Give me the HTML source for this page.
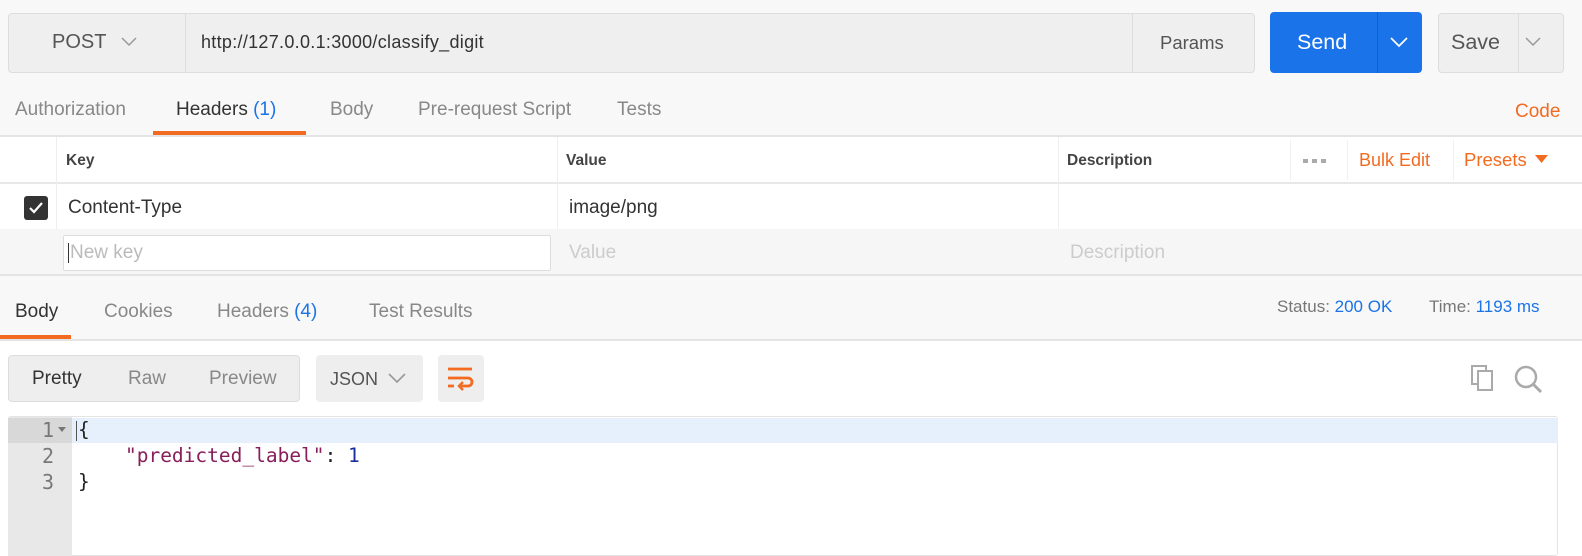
<!DOCTYPE html>
<html><head><style>
*{margin:0;padding:0;box-sizing:border-box}
body{width:1582px;height:556px;overflow:hidden;background:#fff;font-family:"Liberation Sans",sans-serif;position:relative;color:#333}
.a{position:absolute}
.t{position:absolute;white-space:nowrap;font-size:19px;line-height:22px}
</style></head><body>
<div class="a" style="left:0;top:0;width:1582px;height:341px;background:#f8f8f8"></div>
<!-- url bar -->
<div class="a" style="left:8px;top:13px;width:1247px;height:60px;background:#efefef;border:1px solid #ddd;border-radius:4px"></div>
<div class="a" style="left:185px;top:14px;width:1px;height:58px;background:#ddd"></div>
<div class="a" style="left:1132px;top:14px;width:1px;height:58px;background:#ddd"></div>
<div class="t" style="left:52px;top:31px;font-size:20px;color:#555">POST</div>
<svg class="a" style="left:120px;top:36px" width="18" height="12"><path d="M2 2l7 7 7-7" stroke="#999" stroke-width="1.5" fill="none"/></svg>
<div class="t" style="left:201px;top:31px;font-size:18px;letter-spacing:0.3px;color:#333">http://127.0.0.1:3000/classify_digit</div>
<div class="t" style="left:1160px;top:32px;font-size:18.5px;color:#555">Params</div>
<div class="a" style="left:1270px;top:12px;width:152px;height:61px;background:#1a73e8;border-radius:4px"></div>
<div class="a" style="left:1377px;top:12px;width:1px;height:61px;background:#1560c8"></div>
<div class="t" style="left:1297px;top:31px;font-size:21.5px;color:#fff">Send</div>
<svg class="a" style="left:1389px;top:36px" width="20" height="12"><path d="M2 2l8 8 8-8" stroke="#fff" stroke-width="1.8" fill="none"/></svg>
<div class="a" style="left:1438px;top:13px;width:126px;height:60px;background:#efefef;border:1px solid #ddd;border-radius:4px"></div>
<div class="a" style="left:1518px;top:14px;width:1px;height:58px;background:#ddd"></div>
<div class="t" style="left:1451px;top:31px;font-size:21.5px;color:#555">Save</div>
<svg class="a" style="left:1524px;top:36px" width="18" height="12"><path d="M2 2l7 7 7-7" stroke="#999" stroke-width="1.5" fill="none"/></svg>
<!-- tabs -->
<div class="t" style="left:15px;top:99px;color:#888">Authorization</div>
<div class="t" style="left:176px;top:99px;color:#333">Headers <span style="color:#1a73e8">(1)</span></div>
<div class="t" style="left:330px;top:99px;color:#888">Body</div>
<div class="t" style="left:418px;top:99px;color:#888">Pre-request Script</div>
<div class="t" style="left:617px;top:99px;color:#888">Tests</div>
<div class="t" style="left:1515px;top:101px;color:#f26b21">Code</div>
<div class="a" style="left:153px;top:131px;width:153px;height:4px;background:#f26b21"></div>
<div class="a" style="left:0;top:135px;width:1582px;height:2px;background:#e4e4e4"></div>
<!-- table -->
<div class="a" style="left:0;top:137px;width:1582px;height:137px;background:#fff"></div>
<div class="a" style="left:0;top:182px;width:1582px;height:2px;background:#e8e8e8"></div>
<div class="a" style="left:56px;top:137px;width:1px;height:92px;background:#eee"></div>
<div class="a" style="left:557px;top:137px;width:1px;height:92px;background:#eee"></div>
<div class="a" style="left:1058px;top:137px;width:1px;height:92px;background:#eee"></div>
<div class="a" style="left:1290px;top:140px;width:1px;height:40px;background:#f0f0f0"></div>
<div class="a" style="left:1347px;top:140px;width:1px;height:40px;background:#f0f0f0"></div>
<div class="a" style="left:1453px;top:140px;width:1px;height:40px;background:#f0f0f0"></div>
<div class="t" style="left:66px;top:150px;font-size:15.5px;font-weight:bold;color:#444">Key</div>
<div class="t" style="left:566px;top:150px;font-size:15.5px;font-weight:bold;color:#444">Value</div>
<div class="t" style="left:1067px;top:150px;font-size:15.5px;font-weight:bold;color:#444">Description</div>
<div class="a" style="left:1303px;top:159px;width:5px;height:4px;background:#aaa"></div>
<div class="a" style="left:1312px;top:159px;width:5px;height:4px;background:#aaa"></div>
<div class="a" style="left:1321px;top:159px;width:5px;height:4px;background:#aaa"></div>
<div class="t" style="left:1359px;top:149px;font-size:18px;color:#f26b21">Bulk Edit</div>
<div class="t" style="left:1464px;top:149px;font-size:18.5px;color:#f26b21">Presets</div>
<svg class="a" style="left:1535px;top:155px" width="13" height="9"><path d="M0 0h13L6.5 8z" fill="#f26b21"/></svg>
<div class="a" style="left:24px;top:196px;width:24px;height:24px;background:#333;border-radius:3px"></div>
<svg class="a" style="left:24px;top:196px" width="24" height="24"><path d="M6 12l4 4 8-9" stroke="#fff" stroke-width="2.2" fill="none"/></svg>
<div class="t" style="left:68px;top:197px;color:#333">Content-Type</div>
<div class="t" style="left:569px;top:197px;color:#333">image/png</div>
<div class="a" style="left:0;top:229px;width:1582px;height:45px;background:#f6f6f6"></div>
<div class="a" style="left:63px;top:235px;width:488px;height:36px;background:#fff;border:1px solid #ddd;border-radius:2px"></div>
<div class="a" style="left:68px;top:243px;width:1px;height:20px;background:#333"></div>
<div class="t" style="left:70px;top:242px;color:#bbb">New key</div>
<div class="t" style="left:569px;top:242px;color:#ccc">Value</div>
<div class="t" style="left:1070px;top:242px;color:#ccc">Description</div>
<div class="a" style="left:0;top:274px;width:1582px;height:2px;background:#e4e4e4"></div>
<!-- response tabs -->
<div class="t" style="left:15px;top:301px;color:#333">Body</div>
<div class="t" style="left:104px;top:301px;color:#888">Cookies</div>
<div class="t" style="left:217px;top:301px;color:#888">Headers <span style="color:#1a73e8">(4)</span></div>
<div class="t" style="left:369px;top:301px;color:#888">Test Results</div>
<div class="a" style="left:0;top:335px;width:71px;height:4px;background:#f26b21"></div>
<div class="a" style="left:0;top:339px;width:1582px;height:2px;background:#e4e4e4"></div>
<div class="t" style="left:1277px;top:296px;font-size:17px;color:#777">Status: <span style="color:#1a73e8">200 OK</span></div>
<div class="t" style="left:1429px;top:296px;font-size:17px;color:#777">Time: <span style="color:#1a73e8">1193 ms</span></div>
<!-- body controls -->
<div class="a" style="left:8px;top:355px;width:292px;height:47px;background:#eee;border:1px solid #ddd;border-radius:4px"></div>
<div class="t" style="left:32px;top:368px;color:#333">Pretty</div>
<div class="t" style="left:128px;top:368px;color:#888">Raw</div>
<div class="t" style="left:209px;top:368px;color:#888">Preview</div>
<div class="a" style="left:316px;top:355px;width:107px;height:47px;background:#eee;border-radius:4px"></div>
<div class="t" style="left:330px;top:368px;font-size:18px;color:#555">JSON</div>
<svg class="a" style="left:387px;top:372px" width="20" height="12"><path d="M2 2l8 8 8-8" stroke="#999" stroke-width="1.6" fill="none"/></svg>
<div class="a" style="left:438px;top:355px;width:46px;height:47px;background:#eee;border-radius:4px"></div>
<svg class="a" style="left:446px;top:365px" width="30" height="28"><path d="M2 4h24M2 13h20a4 4 0 0 1 0 8h-7M2 21h6" stroke="#f26b21" stroke-width="2.8" fill="none"/><path d="M17 17l-4 4 4 4" stroke="#f26b21" stroke-width="2.4" fill="none"/></svg>
<svg class="a" style="left:1470px;top:364px" width="30" height="30"><rect x="2" y="2" width="14" height="18" fill="none" stroke="#aaa" stroke-width="2"/><rect x="8" y="7" width="14" height="19" fill="#fff" stroke="#aaa" stroke-width="2"/></svg>
<svg class="a" style="left:1513px;top:364px" width="32" height="32"><circle cx="13" cy="13" r="10" fill="none" stroke="#aaa" stroke-width="2.5"/><path d="M20 20l8 8" stroke="#aaa" stroke-width="3"/></svg>
<!-- editor -->
<div class="a" style="left:8px;top:416px;width:1550px;height:140px;border:1px solid #e4e4e4;border-radius:3px;background:#fff"></div>
<div class="a" style="left:8px;top:417px;width:64px;height:139px;background:#e8e8e8"></div>
<div class="a" style="left:8px;top:418px;width:64px;height:25px;background:#d8d8d8"></div>
<div class="a" style="left:72px;top:418px;width:1486px;height:25px;background:#e6f0fc"></div>
<div class="a" style="left:76px;top:421px;width:1px;height:20px;background:#555"></div>
<div class="a" style="font-family:'DejaVu Sans Mono','Liberation Mono',monospace;font-size:20px;line-height:26px;left:8px;top:417px;width:46px;text-align:right;color:#777">1<br>2<br>3</div>
<svg class="a" style="left:58px;top:427px" width="8" height="6"><path d="M0 0h8L4 5z" fill="#777"/></svg>
<div class="a" style="font-family:'DejaVu Sans Mono','Liberation Mono',monospace;font-size:19.5px;line-height:26px;left:78px;top:417px;color:#222;white-space:pre">{
    <span style="color:#881f5a">"predicted_label"</span>: <span style="color:#1a2ea0">1</span>
}</div>
</body></html>
